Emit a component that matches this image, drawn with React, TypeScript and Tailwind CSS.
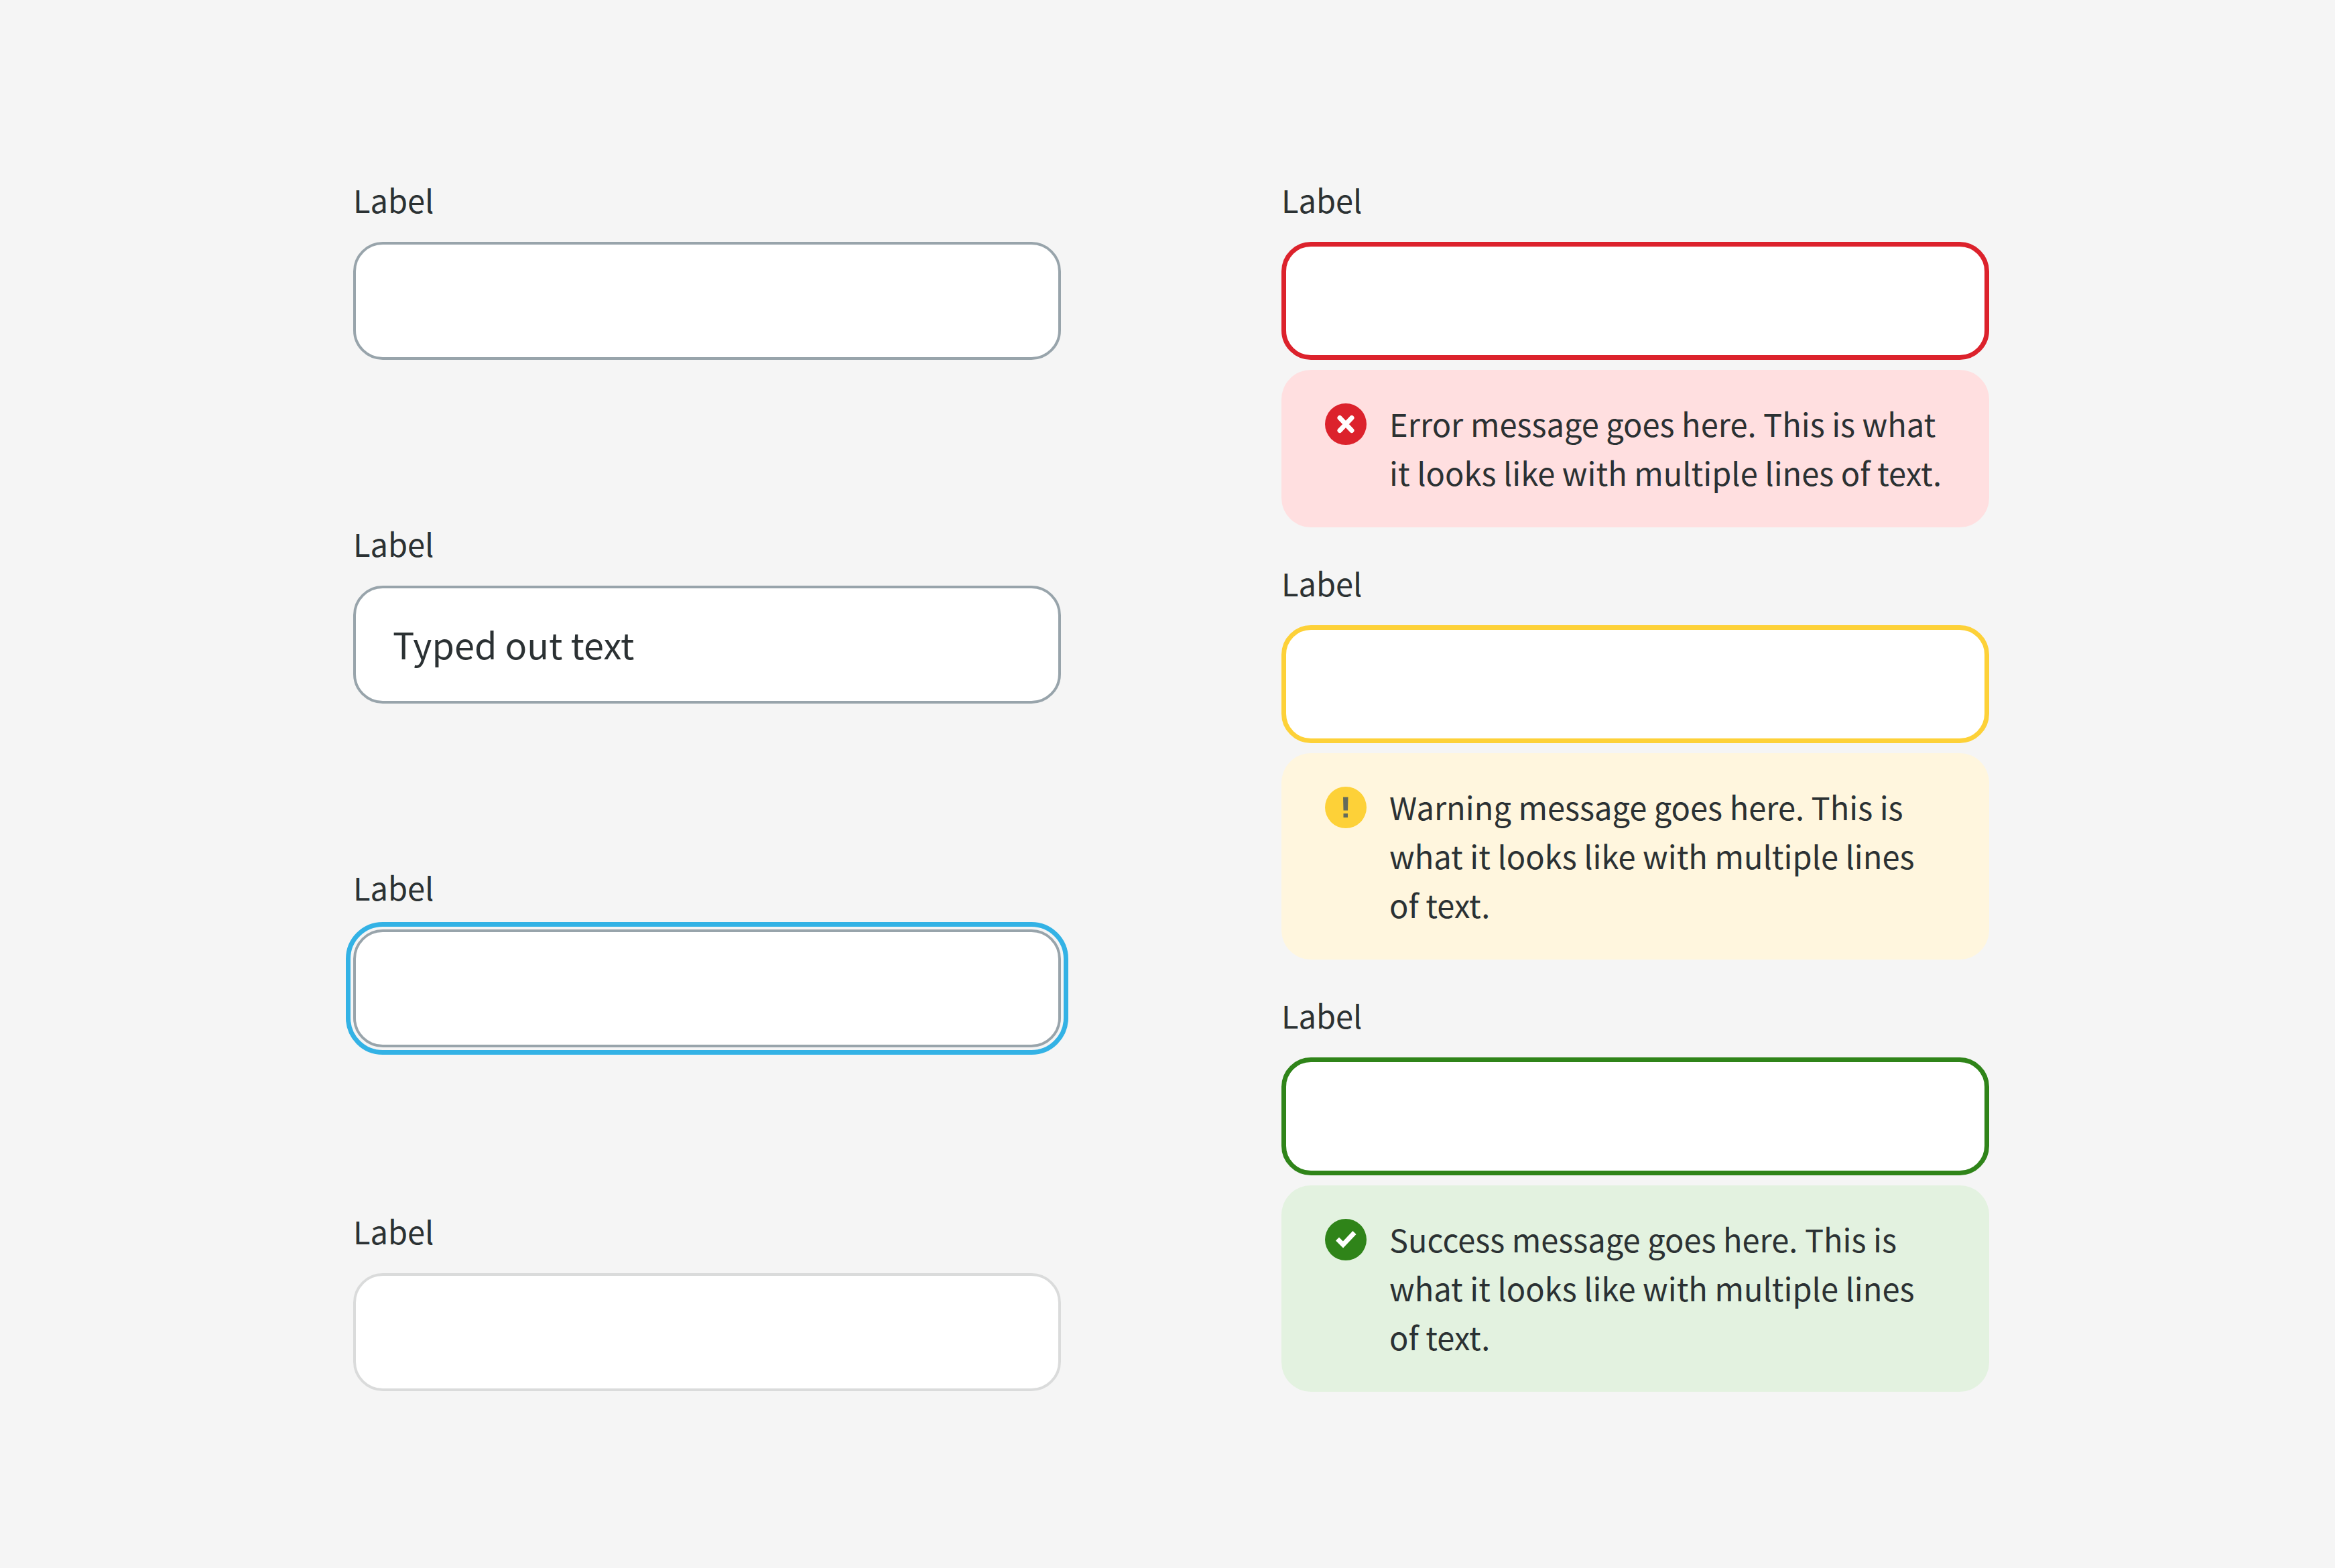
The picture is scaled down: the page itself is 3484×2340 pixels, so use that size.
import React, { useId } from "react";

type Tone = "default" | "focused" | "disabled" | "error" | "warning" | "success";

const inputTones: Record<Tone, string> = {
  default: "border-4 border-[#98a4ab] px-[55px]",
  focused:
    "border-4 border-[#98a4ab] px-[55px] outline-7 outline-offset-4 outline-[#33b2e5]",
  disabled: "border-4 border-[#dadbdb] px-[55px]",
  error: "border-7 border-[#dc222c] px-[52px]",
  warning: "border-7 border-[#fdd138] px-[52px]",
  success: "border-7 border-[#2f8419] px-[52px]",
};

const messageTones = {
  error: "bg-[#ffdfe0]",
  warning: "bg-[#fff6de]",
  success: "bg-[#e3f2e0]",
};

function ErrorIcon() {
  return (
    <svg viewBox="0 0 64 64" className="size-16" aria-hidden="true">
      <circle cx="32" cy="32" r="31" fill="#dc222c" />
      <path d="M23 22.500l18 19M41 22.500L23 41.500" stroke="#fff" strokeWidth="7" strokeLinecap="round" />
    </svg>
  );
}

function WarningIcon() {
  return (
    <svg viewBox="0 0 64 64" className="size-16" aria-hidden="true">
      <circle cx="32" cy="32" r="31" fill="#fdd138" />
      <path d="M28 16.500h7.500l-.5 20h-6.500zM28.500 41h6.500v6h-6.500z" fill="#636a5c" />
    </svg>
  );
}

function SuccessIcon() {
  return (
    <svg viewBox="0 0 64 64" className="size-16" aria-hidden="true">
      <circle cx="32" cy="32" r="31" fill="#2f8419" />
      <path d="M19.500 31l8.500 8.500L45 21.500" fill="none" stroke="#fff" strokeWidth="7" />
    </svg>
  );
}

const icons = { error: ErrorIcon, warning: WarningIcon, success: SuccessIcon };

function Field({
  tone = "default",
  value = "",
  message,
}: {
  tone?: Tone;
  value?: string;
  message?: string;
}) {
  const id = useId();
  const status = tone === "error" || tone === "warning" || tone === "success" ? tone : null;
  const Icon = status ? icons[status] : null;
  return (
    <div className="flex flex-col">
      <label htmlFor={id} className="mb-[27px] self-start text-[47px] leading-[73px]">
        Label
      </label>
      <input
        id={id}
        type="text"
        defaultValue={value}
        disabled={tone === "disabled"}
        aria-invalid={tone === "error" || undefined}
        aria-describedby={message ? `${id}-message` : undefined}
        className={`h-44 w-full rounded-[44px] bg-white pb-1 text-[54px] ${inputTones[tone]}`}
      />
      {status && Icon && (
        <div
          id={`${id}-message`}
          className={`mt-[15px] flex items-start gap-[33px] rounded-[44px] pt-[43px] pr-[62px] pb-[46px] pl-16 ${messageTones[status]}`}
        >
          <span className="flex h-[75px] shrink-0 items-center">
            <Icon />
          </span>
          <p className="text-[47px] leading-[73px]">{message}</p>
        </div>
      )}
    </div>
  );
}

export default function App() {
  return (
    <main className="grid min-h-screen grid-cols-2 items-start gap-x-[329px] bg-[#f5f5f5] pt-[261px] pr-[516px] pb-[261px] pl-[527px] font-['Noto_Sans_CJK_SC',sans-serif] text-[#2b3133]">
      <div className="flex flex-col gap-[237px]">
        <Field />
        <Field value="Typed out text" />
        <Field tone="focused" />
        <Field tone="disabled" />
      </div>
      <div className="flex flex-col gap-[46px]">
        <Field
          tone="error"
          message="Error message goes here. This is what it looks like with multiple lines of text."
        />
        <Field
          tone="warning"
          message="Warning message goes here. This is what it looks like with multiple lines of text."
        />
        <Field
          tone="success"
          message="Success message goes here. This is what it looks like with multiple lines of text."
        />
      </div>
    </main>
  );
}
